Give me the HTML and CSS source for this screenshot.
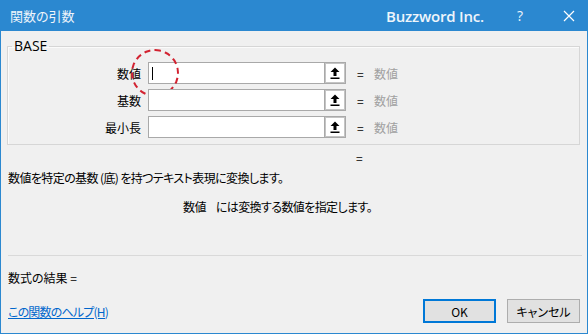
FILE: index.html
```html
<!DOCTYPE html>
<html lang="ja">
<head>
<meta charset="utf-8">
<title>関数の引数</title>
<link rel="stylesheet" href="styles.css">
</head>
<body>
<div class="window">
  <div class="titlebar">
    <span class="title">関数の引数</span>
    <span class="brand">Buzzword Inc.</span>
    <span class="tb-help">?</span>
    <span class="tb-close"><svg width="12" height="12" viewBox="0 0 12 12"><path d="M1 1L11 11M11 1L1 11" stroke="#ffffff" stroke-width="1.2" fill="none"/></svg></span>
  </div>
  <div class="content">
    <fieldset class="group">
      <legend class="legend">BASE</legend>
      <div class="row">
        <label class="lbl">数値</label>
        <div class="field"><span class="caret"></span></div>
        <div class="pick"><svg width="10" height="12" viewBox="0 0 10 12"><path d="M5 0.5L9.5 5H6.5V9H3.5V5H0.5Z" fill="#000"/><rect x="0.5" y="10.5" width="9" height="1.5" fill="#000"/></svg></div>
        <span class="eq">=</span>
        <span class="val">数値</span>
        <span class="circle"></span>
      </div>
      <div class="row">
        <label class="lbl">基数</label>
        <div class="field"></div>
        <div class="pick"><svg width="10" height="12" viewBox="0 0 10 12"><path d="M5 0.5L9.5 5H6.5V9H3.5V5H0.5Z" fill="#000"/><rect x="0.5" y="10.5" width="9" height="1.5" fill="#000"/></svg></div>
        <span class="eq">=</span>
        <span class="val">数値</span>
      </div>
      <div class="row">
        <label class="lbl">最小長</label>
        <div class="field"></div>
        <div class="pick"><svg width="10" height="12" viewBox="0 0 10 12"><path d="M5 0.5L9.5 5H6.5V9H3.5V5H0.5Z" fill="#000"/><rect x="0.5" y="10.5" width="9" height="1.5" fill="#000"/></svg></div>
        <span class="eq">=</span>
        <span class="val">数値</span>
      </div>
    </fieldset>
    <div class="eqline">=</div>
    <div class="desc">数値を特定の基数 (底) を持つテキスト表現に変換します。</div>
    <div class="argdesc"><span class="argname">数値</span><span>には変換する数値を指定します。</span></div>
    <div class="sep"></div>
    <div class="result">数式の結果 =</div>
    <div class="bottom">
      <a class="help" href="#">この関数のヘルプ(H)</a>
      <div class="buttons">
        <button class="btn btn-ok">OK</button>
        <button class="btn">キャンセル</button>
      </div>
    </div>
  </div>
</div>
</body>
</html>
```
FILE: styles.css
```css
* { box-sizing: border-box; }
html, body { margin: 0; padding: 0; }
body {
  width: 588px;
  height: 334px;
  overflow: hidden;
  font-family: "Noto Sans CJK JP", "Noto Sans", sans-serif;
  font-size: 12px;
  font-feature-settings: "palt";
  color: #000;
}
.window {
  width: 588px;
  height: 334px;
  background: #f0f0f0;
  border: 1px solid #2b88d0;
  border-top: none;
  display: flex;
  flex-direction: column;
}
.titlebar {
  height: 31px;
  flex: none;
  background: #2b88d0;
  color: #ffffff;
  display: flex;
  align-items: center;
  margin: 0 -1px;
}
.title {
  margin-left: 10px;
  font-size: 13px;
  color: #eef5fb;
  flex: 1;
}
.brand {
  font-family: "Open Sans", "Noto Sans", sans-serif;
  font-size: 15px;
  font-weight: 600;
  color: #eef5fb;
  letter-spacing: -0.2px;
  margin-right: 33px;
}
.tb-help {
  font-family: "Open Sans", sans-serif;
  font-size: 14px;
  color: #eef5fb;
  margin-right: 40px;
}
.tb-close {
  display: flex;
  margin-right: 13px;
}
.content {
  padding: 0 6px;
  display: flex;
  flex-direction: column;
}
.group {
  margin: 8px 0 0 0;
  padding: 9px 0 5px 0;
  border: 1px solid #d6d6d6;
  box-shadow: inset 1px 1px 0 #fbfbfb;
  width: 573px;
  height: 106px;
  display: flex;
  flex-direction: column;
  gap: 5px;
}
.legend {
  padding: 0 2px;
  margin-left: 4px;
  font-family: "Open Sans", "Noto Sans", sans-serif;
  font-size: 14px;
  line-height: 14px;
}
.row {
  display: flex;
  align-items: center;
  height: 22px;
  position: relative;
}
.lbl {
  width: 133px;
  text-align: right;
  margin-right: 7px;
  font-size: 12px;
}
.field {
  width: 176px;
  height: 22px;
  background: #ffffff;
  border: 1px solid #a9a9a9;
  border-right: none;
  position: relative;
}
.caret {
  position: absolute;
  left: 3px;
  top: 4px;
  width: 1px;
  height: 13px;
  background: #000;
}
.pick {
  width: 22px;
  height: 22px;
  background: #ffffff;
  border: 2px solid #c4c4c4;
  outline: 1px solid #a9a9a9;
  outline-offset: -1px;
  display: flex;
  align-items: center;
  justify-content: center;
}
.eq {
  margin-left: 11px;
  width: 17px;
  font-size: 12px;
}
.val {
  color: #a0a0a0;
  font-size: 12px;
}
.circle {
  position: absolute;
  left: 123px;
  top: -13px;
  width: 48px;
  height: 48px;
  border: 2px dashed #d22230;
  border-radius: 50%;
  pointer-events: none;
}
.eqline {
  margin-top: 5px;
  margin-left: 349px;
  line-height: 16px;
}
.desc {
  margin-top: 4px;
  margin-left: 1px;
  line-height: 16px;
  letter-spacing: -0.6px;
}
.argdesc {
  margin-top: 13px;
  margin-left: 176px;
  line-height: 16px;
  display: flex;
  gap: 10px;
  letter-spacing: -0.6px;
}
.sep {
  margin-top: 40px;
  height: 1px;
  background: #d9d9d9;
  margin-left: 1px;
  margin-right: -1px;
}
.result {
  margin-top: 14px;
  margin-left: 1px;
  line-height: 16px;
}
.bottom {
  margin-top: 13px;
  display: flex;
  align-items: center;
  justify-content: space-between;
  padding-left: 1px;
  padding-right: 1px;
}
.help {
  color: #0066cc;
  text-decoration: underline;
  font-size: 12px;
  letter-spacing: -0.8px;
}
.buttons {
  display: flex;
  gap: 11px;
}
.btn {
  width: 73px;
  height: 24px;
  background: #e1e1e1;
  border: 1px solid #adadad;
  font-family: "Noto Sans CJK JP", "Noto Sans", sans-serif;
  font-size: 12px;
  font-feature-settings: "palt";
  color: #000;
  padding: 0;
}
.btn-ok {
  border: 2px solid #0078d7;
}
```
